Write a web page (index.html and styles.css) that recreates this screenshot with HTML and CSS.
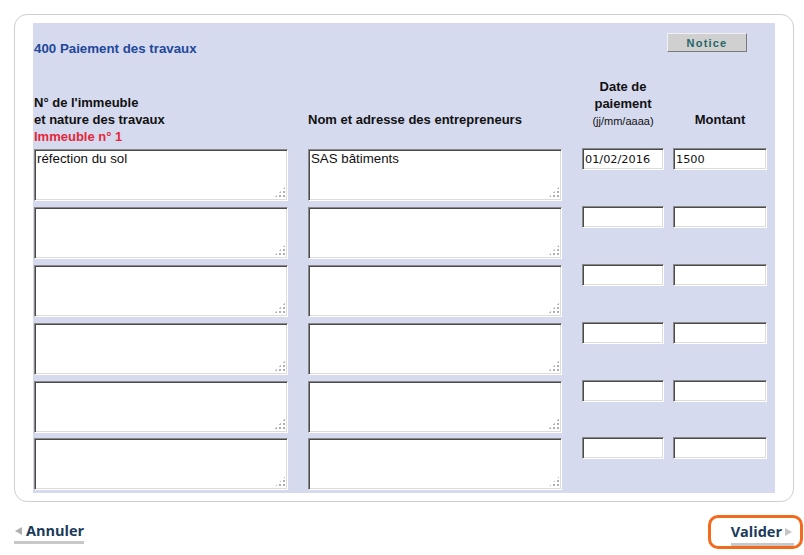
FILE: index.html
```html
<!DOCTYPE html>
<html lang="fr">
<head>
<meta charset="utf-8">
<title>400 Paiement des travaux</title>
<link rel="stylesheet" href="styles.css">
</head>
<body>
<div class="frame">
  <div class="panel">
    <div class="top">
      <h1 class="title">400 Paiement des travaux</h1>
      <button class="notice" type="button">Notice</button>
    </div>
    <div class="heads">
      <div class="h h-left">N° de l'immeuble<br>et nature des travaux</div>
      <div class="h h-left">Nom et adresse des entrepreneurs</div>
      <div class="h h-date">Date de<br>paiement<br><span class="small">(jj/mm/aaaa)</span></div>
      <div class="h h-amt">Montant</div>
      <div class="imm">Immeuble n° 1</div>
    </div>
    <div class="rows">
      <div class="ta"><textarea class="area">réfection du sol</textarea><span class="grip"></span></div>
      <div class="ta"><textarea class="area">SAS bâtiments</textarea><span class="grip"></span></div>
      <input class="field f-date" value="01/02/2016">
      <input class="field f-amt" value="1500">

      <div class="ta"><textarea class="area"></textarea><span class="grip"></span></div>
      <div class="ta"><textarea class="area"></textarea><span class="grip"></span></div>
      <input class="field f-date" value="">
      <input class="field f-amt" value="">

      <div class="ta"><textarea class="area"></textarea><span class="grip"></span></div>
      <div class="ta"><textarea class="area"></textarea><span class="grip"></span></div>
      <input class="field f-date" value="">
      <input class="field f-amt" value="">

      <div class="ta"><textarea class="area"></textarea><span class="grip"></span></div>
      <div class="ta"><textarea class="area"></textarea><span class="grip"></span></div>
      <input class="field f-date" value="">
      <input class="field f-amt" value="">

      <div class="ta"><textarea class="area"></textarea><span class="grip"></span></div>
      <div class="ta"><textarea class="area"></textarea><span class="grip"></span></div>
      <input class="field f-date" value="">
      <input class="field f-amt" value="">

      <div class="ta"><textarea class="area"></textarea><span class="grip"></span></div>
      <div class="ta"><textarea class="area"></textarea><span class="grip"></span></div>
      <input class="field f-date" value="">
      <input class="field f-amt" value="">
    </div>
  </div>
</div>
<div class="actions">
  <a class="link back" href="#"><span class="tri tri-left"></span>Annuler</a>
  <div class="valid-box">
    <a class="link next" href="#">Valider<span class="tri tri-right"></span></a>
  </div>
</div>
</body>
</html>
```

FILE: styles.css
```css
html, body {
  margin: 0;
  padding: 0;
  background: #ffffff;
}
body {
  font-family: "Liberation Sans", Arial, sans-serif;
  color: #111111;
}
.frame {
  box-sizing: border-box;
  width: 780px;
  height: 488px;
  margin: 14px 0 0 14px;
  border: 1px solid #cfcfcf;
  border-radius: 13px;
  padding: 8px 18px 0 18px;
  background: #ffffff;
}
.panel {
  background: #d6daef;
  height: 470px;
  box-sizing: border-box;
  padding: 10px 8px 0 1px;
}
.top {
  display: flex;
  justify-content: space-between;
  align-items: flex-start;
  height: 23px;
}
.title {
  margin: 8px 0 0 0;
  font-size: 13.3px;
  line-height: 16px;
  font-weight: bold;
  color: #22489a;
}
.notice {
  box-sizing: border-box;
  width: 80px;
  height: 19px;
  margin-right: 20px;
  padding: 0;
  background: #d0d0d0;
  border: 1px solid;
  border-color: #f0f0f0 #7a7a7a #7a7a7a #f0f0f0;
  font-family: "Liberation Sans", Arial, sans-serif;
  font-size: 11px;
  font-weight: bold;
  letter-spacing: 1.2px;
  color: #276666;
  cursor: pointer;
}
.heads {
  display: grid;
  grid-template-columns: 274px 274px 91px 94px;
  align-items: end;
  margin-top: 22px;
  font-size: 13px;
  line-height: 17px;
  font-weight: bold;
}
.h-left { text-align: left; padding-bottom: 2px; }
.h-date { text-align: center; width: 82px; }
.h-amt { text-align: center; width: 94px; padding-bottom: 2px; }
.small {
  font-size: 11px;
  font-weight: normal;
}
.imm {
  grid-column: 1 / -1;
  margin-top: -2px;
  padding-bottom: 1px;
  color: #e3283a;
}
.rows {
  display: grid;
  grid-template-columns: 274px 274px 91px 94px;
  grid-auto-rows: 52px;
  row-gap: 5.9px;
  align-items: start;
  margin-top: 3px;
}
.ta {
  position: relative;
  width: 254px;
  height: 52px;
}
.area, .field {
  box-sizing: border-box;
  display: block;
  margin: 0;
  background: #ffffff;
  border: 1px solid;
  border-color: #8a8a8a #ffffff #ffffff #8a8a8a;
  box-shadow: inset 1px 1px 0 #4a4a4a, inset -1px -1px 0 #dcdcdc;
  outline: none;
  color: #111111;
}
.area {
  width: 254px;
  height: 52px;
  padding: 1px 2px;
  resize: none;
  overflow: hidden;
  font-family: "Liberation Sans", Arial, sans-serif;
  font-size: 13.3px;
  line-height: 15px;
}
.grip {
  position: absolute;
  right: 2px;
  bottom: 3px;
  width: 12px;
  height: 12px;
  background-image: radial-gradient(circle, #b0b0b0 1.1px, transparent 1.4px);
  background-size: 4px 4px;
  clip-path: polygon(100% 0, 100% 100%, 0 100%);
}
.field {
  height: 22px;
  padding: 0 2px;
  font-family: "DejaVu Sans", Verdana, sans-serif;
  font-size: 11.3px;
}
.f-date { width: 82px; margin-top: -1px; }
.f-amt { width: 94px; margin-top: -1px; }
.actions {
  display: flex;
  justify-content: space-between;
  align-items: flex-start;
  margin: 13px 1px 0 14px;
}
.link {
  display: inline-flex;
  align-items: center;
  font-family: "Open Sans", "Liberation Sans", sans-serif;
  font-weight: bold;
  font-size: 14.5px;
  line-height: 20px;
  color: #1b3a5a;
  text-decoration: none;
  border-bottom: 3px solid #c8c8c8;
}
.back {
  margin-top: 6px;
  padding-left: 1px;
}
.tri {
  display: inline-block;
  width: 0;
  height: 0;
  border-top: 4.5px solid transparent;
  border-bottom: 4.5px solid transparent;
}
.tri-left {
  border-right: 7px solid #b0b0b0;
  margin-right: 4px;
}
.tri-right {
  border-left: 7px solid #c4c4c4;
  margin-left: 3px;
}
.valid-box {
  box-sizing: border-box;
  width: 95px;
  height: 34px;
  border: 3px solid #f26a1b;
  border-radius: 10px;
  padding: 3px 6px 0 22px;
  display: flex;
  justify-content: flex-end;
}
.next {
  padding-right: 2px;
}
```
